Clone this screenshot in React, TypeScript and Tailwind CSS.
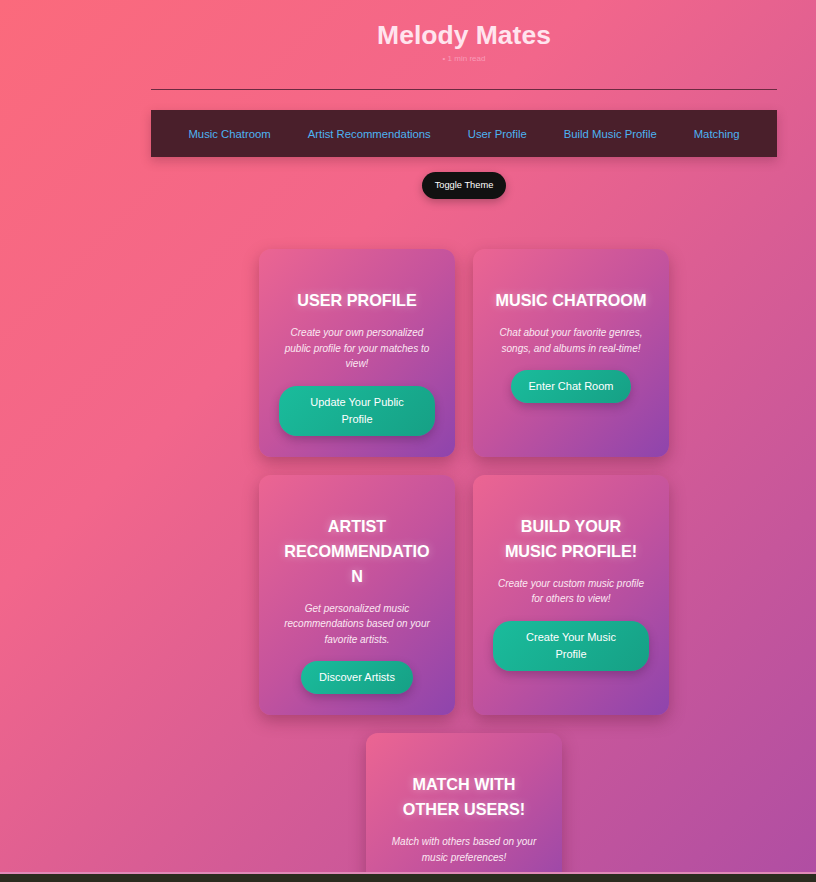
const links = [
  "Music Chatroom",
  "Artist Recommendations",
  "User Profile",
  "Build Music Profile",
  "Matching",
];

const cards = [
  {
    title: "User Profile",
    text: "Create your own personalized public profile for your matches to view!",
    cta: "Update Your Public Profile",
  },
  {
    title: "Music Chatroom",
    text: "Chat about your favorite genres, songs, and albums in real-time!",
    cta: "Enter Chat Room",
  },
  {
    title: "Artist Recommendation",
    text: "Get personalized music recommendations based on your favorite artists.",
    cta: "Discover Artists",
  },
  {
    title: "Build Your Music Profile!",
    text: "Create your custom music profile for others to view!",
    cta: "Create Your Music Profile",
  },
  {
    title: "Match With Other Users!",
    text: "Match with others based on your music preferences!",
    cta: "Find Your Matches",
  },
];

function FeatureCard({ title, text, cta }: { title: string; text: string; cta: string }) {
  return (
    <div className="w-[196px] rounded-xl bg-[linear-gradient(135deg,#ec6592_0%,#c4539d_50%,#8e44ad_100%)] px-5 pt-5 pb-[21px] text-center shadow-[0_6px_16px_rgba(90,20,50,0.35)]">
      <h2 className="mt-[19px] break-words text-[16.2px] leading-[25px] font-bold text-white uppercase [text-shadow:0_0_8px_rgba(255,255,255,0.4)]">
        {title}
      </h2>
      <p className="mt-3 text-[10px] leading-[15.5px] text-[#fbe8f2] italic">{text}</p>
      <button className="mt-[14px] rounded-[18px] bg-[linear-gradient(135deg,#1abc9c,#16a085)] px-[18px] py-2 text-[11px] leading-[17px] text-white shadow-[0_4px_10px_rgba(60,20,60,0.3)]">
        {cta}
      </button>
    </div>
  );
}

export default function App() {
  return (
    <div className="flex h-[882px] flex-col overflow-hidden font-['Liberation_Sans',Arial,sans-serif]">
      <div className="flex-1 overflow-hidden bg-[linear-gradient(135deg,#fb6a7c_0%,#f2668b_35%,#b04ea3_100%)]">
        <div className="ml-[151px] w-[626px]">
          <header className="pt-[19px] pb-[25px] text-center">
            <h1 className="text-[26.5px] leading-[32px] font-bold text-[#ffe4ee]">Melody Mates</h1>
            <p className="mt-[3px] text-[8px] leading-[10px] text-[#f99bb8]">• 1 min read</p>
          </header>
          <div className="h-px bg-[#6b2a40]"></div>
          <nav className="mt-5 flex h-[47px] items-center justify-center gap-[37px] bg-[#4a1f2b] shadow-[0_4px_10px_rgba(80,20,40,0.25)]">
            {links.map((l) => (
              <a key={l} className="pt-px text-[11.3px] text-[#4db3f2]">
                {l}
              </a>
            ))}
          </nav>
          <div className="mt-[15px] flex justify-center">
            <button className="h-[27px] rounded-full bg-[#111] px-[13px] text-[9.3px] text-white shadow-[0_3px_8px_rgba(0,0,0,0.25)]">
              Toggle Theme
            </button>
          </div>
        </div>
        <div className="mt-[50px] ml-[259px] flex w-[410px] flex-wrap justify-center gap-[18px]">
          {cards.map((c) => (
            <FeatureCard key={c.title} {...c} />
          ))}
        </div>
      </div>
      <div className="h-[10px] border-t-2 border-[#e08ab8] bg-[#2b2c1f]"></div>
    </div>
  );
}
